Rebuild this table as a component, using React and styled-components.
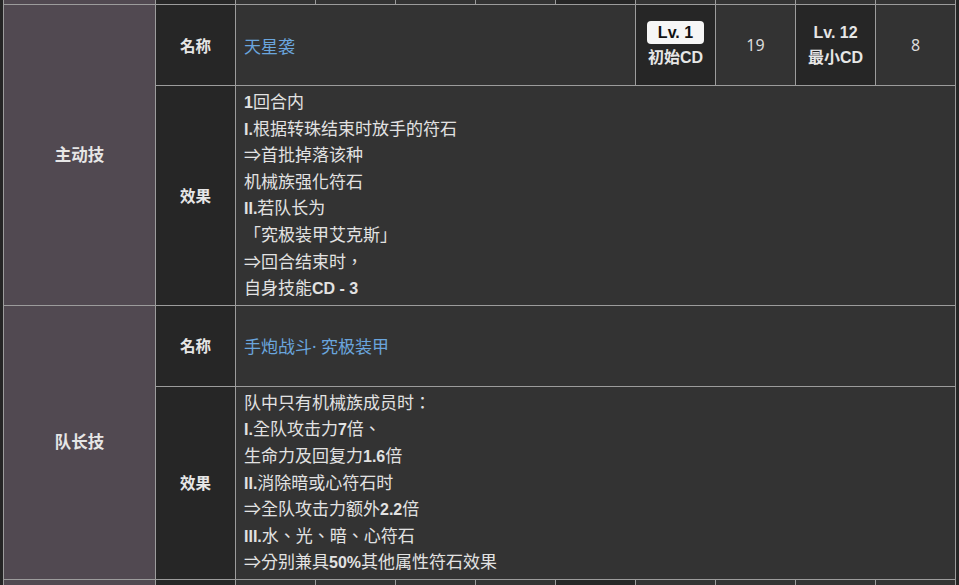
import React from "react";
import styled, { createGlobalStyle } from "styled-components";

const GlobalStyle = createGlobalStyle`
  html, body {
    margin: 0;
    padding: 0;
    background: #252525;
    overflow: hidden;
  }
  body {
    font-family: "Noto Sans", "Noto Sans CJK TC", sans-serif;
    color: #e2e2e2;
  }
`;

const Table = styled.div`
  display: grid;
  grid-template-columns: 151px repeat(10, 79px);
  gap: 1px;
  padding: 0 1px 1px 1px;
  margin-left: 3px;
  width: max-content;
  background: #9c9c9c;
`;

const Cell = styled.div`
  background: ${(p) => (p.$dark ? "#262626" : "#333333")};
  height: ${(p) => p.$h || "auto"};
`;

const Section = styled.div`
  grid-row: span 2;
  background: #514951;
  display: flex;
  align-items: center;
  justify-content: center;
  font-size: 16.5px;
  font-weight: 700;
  color: #e6e6e6;
  padding-bottom: 2px;
`;

const Label = styled.div`
  background: #262626;
  display: flex;
  align-items: center;
  justify-content: center;
  font-size: 15.5px;
  font-weight: 700;
  color: #e6e6e6;
  min-height: 80px;
`;

const NameCell = styled.div`
  grid-column: span ${(p) => p.$span};
  background: #333333;
  display: flex;
  align-items: center;
  padding: 0 8px;
  font-size: 17px;
  color: #6aa5dd;
`;

const CdHead = styled.div`
  background: #262626;
  display: flex;
  flex-direction: column;
  align-items: center;
  justify-content: center;
  gap: 2px;
  font-size: 16px;
  font-weight: 700;
  color: #e6e6e6;
  line-height: 22px;
`;

const Badge = styled.span`
  background: #f6f6f6;
  color: #111;
  border-radius: 4px;
  padding: 0 11px;
  line-height: 23px;
  font-family: "Liberation Sans", "Noto Sans", sans-serif;
  font-size: 16px;
`;

const Level = styled.span`
  font-family: "Liberation Sans", "Noto Sans", sans-serif;
  font-size: 16px;
`;

const Value = styled.div`
  background: #333333;
  display: flex;
  align-items: center;
  justify-content: center;
  font-size: 16px;
  color: #dcdcdc;
`;

const Effect = styled.div`
  grid-column: span 9;
  background: #333333;
  padding: 3px 8px;
  font-size: 17px;
  line-height: 26.6px;
  color: #e2e2e2;
`;

const Line = styled.div`
  white-space: nowrap;
  height: 26.6px;
`;

const Strong = styled.b`
  font-family: "Liberation Sans", "Noto Sans", sans-serif;
  font-weight: 700;
  font-size: 16px;
  line-height: 1;
`;

const rich = (text) =>
  text.split(/([A-Za-z0-9.%\- ]*[A-Za-z0-9.%])/g).map((part, i) =>
    i % 2 === 1 ? <Strong key={i}>{part}</Strong> : part
  );

const darkCols = [1, 6];

const activeLines = [
  "1回合内",
  "I.根据转珠结束时放手的符石",
  "⇒首批掉落该种",
  "机械族强化符石",
  "II.若队长为",
  "「究极装甲艾克斯」",
  "⇒回合结束时，",
  "自身技能CD - 3",
];

const leaderLines = [
  "队中只有机械族成员时：",
  "I.全队攻击力7倍、",
  "生命力及回复力1.6倍",
  "II.消除暗或心符石时",
  "⇒全队攻击力额外2.2倍",
  "III.水、光、暗、心符石",
  "⇒分别兼具50%其他属性符石效果",
];

function StripRow({ h }) {
  return (
    <>
      <Section as={Cell} style={{ gridRow: "auto" }} $h={h} />
      {Array.from({ length: 10 }).map((_, i) => (
        <Cell key={i} $h={h} $dark={darkCols.includes(i + 1)} />
      ))}
    </>
  );
}

export default function App() {
  return (
    <>
      <GlobalStyle />
      <Table>
        <StripRow h="4px" />

        <Section>主动技</Section>
        <Label>名称</Label>
        <NameCell $span={5}>天星袭</NameCell>
        <CdHead>
          <Badge>Lv. 1</Badge>
          <span>
            初始<Level>CD</Level>
          </span>
        </CdHead>
        <Value>19</Value>
        <CdHead>
          <Level>Lv. 12</Level>
          <span>
            最小<Level>CD</Level>
          </span>
        </CdHead>
        <Value>8</Value>
        <Label>效果</Label>
        <Effect>
          {activeLines.map((l) => (
            <Line key={l}>{rich(l)}</Line>
          ))}
        </Effect>

        <Section>队长技</Section>
        <Label>名称</Label>
        <NameCell $span={9}>手炮战斗· 究极装甲</NameCell>
        <Label>效果</Label>
        <Effect>
          {leaderLines.map((l) => (
            <Line key={l}>{rich(l)}</Line>
          ))}
        </Effect>

        <StripRow h="30px" />
      </Table>
    </>
  );
}
